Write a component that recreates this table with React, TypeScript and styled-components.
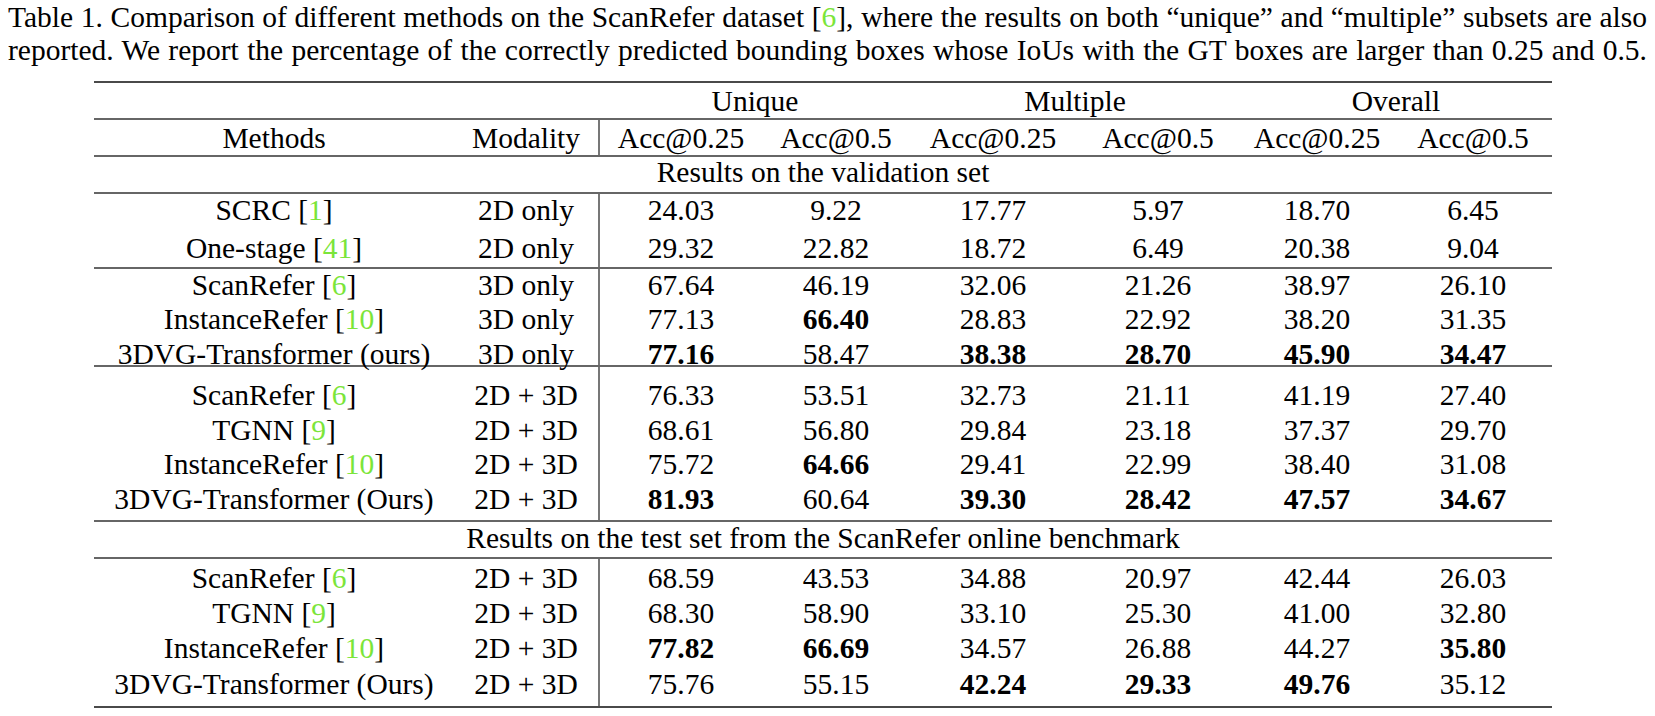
import React from "react";
import styled, { createGlobalStyle } from "styled-components";

const GlobalStyle = createGlobalStyle`
  html, body { margin: 0; padding: 0; background: #ffffff; }
  body {
    padding: 1px 8px 0;
    font-family: "Liberation Serif", "Times New Roman", Times, serif;
    color: #000000;
  }
`;

const COLS = "360px 146px 162px 148px 166px 164px 154px 158px";

const Caption = styled.div`
  font-size: 29.5px;
  line-height: 33px;
`;

const CaptionLine = styled.p`
  margin: 0;
  text-align: justify;
  text-align-last: justify;
`;

const Cite = styled.span`
  color: #7be53a;
`;

const Table = styled.div`
  margin: 14px 0 0 86px;
  width: 1458px;
  font-size: 29.5px;
`;

const Rule = styled.div<{ $thick?: boolean }>`
  height: 2px;
  background: ${(p) => (p.$thick ? "#4a4a4a" : "#666666")};
`;

const Cell = styled.div<{ $sep?: boolean; $bold?: boolean; $span?: number }>`
  box-sizing: border-box;
  text-align: center;
  white-space: nowrap;
  font-weight: ${(p) => (p.$bold ? 700 : 400)};
  grid-column: span ${(p) => p.$span ?? 1};
  border-right: ${(p) => (p.$sep ? "2px solid #777777" : "none")};
`;

const Row = styled.div<{ $h: number; $pt: number }>`
  display: grid;
  grid-template-columns: ${COLS};
  grid-template-rows: ${(p) => p.$h}px;
  height: ${(p) => p.$h}px;
  line-height: 30px;
  & > ${Cell} {
    padding-top: ${(p) => p.$pt}px;
  }
`;

type DataRow = {
  method: string;
  cite?: string;
  suffix?: string;
  modality: string;
  vals: string[];
  bold: number[];
  h: number;
  pt: number;
};

const Method: React.FC<{ r: DataRow }> = ({ r }) => (
  <>
    {r.method}
    {r.cite && (
      <>
        {" ["}
        <Cite>{r.cite}</Cite>
        {"]"}
      </>
    )}
    {r.suffix}
  </>
);

const DataLine: React.FC<{ r: DataRow }> = ({ r }) => (
  <Row $h={r.h} $pt={r.pt}>
    <Cell>
      <Method r={r} />
    </Cell>
    <Cell $sep>{r.modality}</Cell>
    {r.vals.map((v, i) => (
      <Cell key={i} $bold={r.bold.includes(i)}>
        {v}
      </Cell>
    ))}
  </Row>
);

const block1: DataRow[] = [
  { method: "SCRC", cite: "1", modality: "2D only", vals: ["24.03", "9.22", "17.77", "5.97", "18.70", "6.45"], bold: [], h: 37, pt: 1 },
  { method: "One-stage", cite: "41", modality: "2D only", vals: ["29.32", "22.82", "18.72", "6.49", "20.38", "9.04"], bold: [], h: 36, pt: 2 },
];

const block2: DataRow[] = [
  { method: "ScanRefer", cite: "6", modality: "3D only", vals: ["67.64", "46.19", "32.06", "21.26", "38.97", "26.10"], bold: [], h: 33, pt: 1 },
  { method: "InstanceRefer", cite: "10", modality: "3D only", vals: ["77.13", "66.40", "28.83", "22.92", "38.20", "31.35"], bold: [1], h: 35, pt: 2 },
  { method: "3DVG-Transformer (ours)", modality: "3D only", vals: ["77.16", "58.47", "38.38", "28.70", "45.90", "34.47"], bold: [0, 2, 3, 4, 5], h: 28, pt: 2 },
];

const block3: DataRow[] = [
  { method: "ScanRefer", cite: "6", modality: "2D + 3D", vals: ["76.33", "53.51", "32.73", "21.11", "41.19", "27.40"], bold: [], h: 46, pt: 13 },
  { method: "TGNN", cite: "9", modality: "2D + 3D", vals: ["68.61", "56.80", "29.84", "23.18", "37.37", "29.70"], bold: [], h: 35, pt: 2 },
  { method: "InstanceRefer", cite: "10", modality: "2D + 3D", vals: ["75.72", "64.66", "29.41", "22.99", "38.40", "31.08"], bold: [1], h: 34, pt: 1 },
  { method: "3DVG-Transformer (Ours)", modality: "2D + 3D", vals: ["81.93", "60.64", "39.30", "28.42", "47.57", "34.67"], bold: [0, 2, 3, 4, 5], h: 38, pt: 2 },
];

const block4: DataRow[] = [
  { method: "ScanRefer", cite: "6", modality: "2D + 3D", vals: ["68.59", "43.53", "34.88", "20.97", "42.44", "26.03"], bold: [], h: 36, pt: 4 },
  { method: "TGNN", cite: "9", modality: "2D + 3D", vals: ["68.30", "58.90", "33.10", "25.30", "41.00", "32.80"], bold: [], h: 35, pt: 3 },
  { method: "InstanceRefer", cite: "10", modality: "2D + 3D", vals: ["77.82", "66.69", "34.57", "26.88", "44.27", "35.80"], bold: [0, 1, 5], h: 35, pt: 3 },
  { method: "3DVG-Transformer (Ours)", modality: "2D + 3D", vals: ["75.76", "55.15", "42.24", "29.33", "49.76", "35.12"], bold: [2, 3, 4], h: 41, pt: 4 },
];

const Block: React.FC<{ rows: DataRow[] }> = ({ rows }) => (
  <>
    {rows.map((r, i) => (
      <DataLine key={i} r={r} />
    ))}
  </>
);

export default function App() {
  return (
    <>
      <GlobalStyle />
      <Caption>
        <CaptionLine>
          Table 1. Comparison of different methods on the ScanRefer dataset [<Cite>6</Cite>], where the results on both “unique” and “multiple” subsets are also
        </CaptionLine>
        <CaptionLine>
          reported. We report the percentage of the correctly predicted bounding boxes whose IoUs with the GT boxes are larger than 0.25 and 0.5.
        </CaptionLine>
      </Caption>
      <Table>
        <Rule $thick />
        <Row $h={35} $pt={3}>
          <Cell $span={2} />
          <Cell $span={2}>Unique</Cell>
          <Cell $span={2}>Multiple</Cell>
          <Cell $span={2}>Overall</Cell>
        </Row>
        <Rule />
        <Row $h={35} $pt={3}>
          <Cell>Methods</Cell>
          <Cell $sep>Modality</Cell>
          <Cell>Acc@0.25</Cell>
          <Cell>Acc@0.5</Cell>
          <Cell>Acc@0.25</Cell>
          <Cell>Acc@0.5</Cell>
          <Cell>Acc@0.25</Cell>
          <Cell>Acc@0.5</Cell>
        </Row>
        <Rule />
        <Row $h={35} $pt={0}>
          <Cell $span={8}>Results on the validation set</Cell>
        </Row>
        <Rule />
        <Block rows={block1} />
        <Rule />
        <Block rows={block2} />
        <Rule />
        <Block rows={block3} />
        <Rule />
        <Row $h={35} $pt={1}>
          <Cell $span={8}>Results on the test set from the ScanRefer online benchmark</Cell>
        </Row>
        <Rule />
        <Block rows={block4} />
        <Rule $thick />
      </Table>
    </>
  );
}
